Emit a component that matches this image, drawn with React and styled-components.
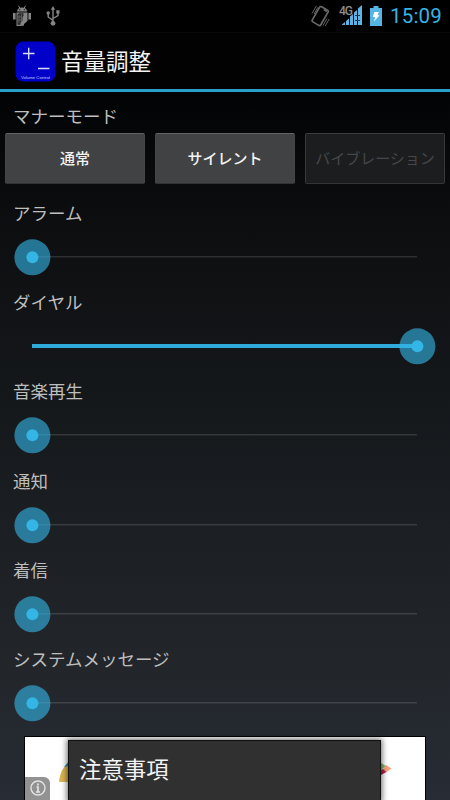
import React, { useState } from 'react';
import styled, { createGlobalStyle } from 'styled-components';

const GlobalStyle = createGlobalStyle`
  html, body {
    margin: 0;
    padding: 0;
    background: #000;
  }

  * {
    box-sizing: border-box;
  }
`;

const Screen = styled.div`
  display: flex;
  flex-direction: column;
  width: 450px;
  height: 800px;
  overflow: hidden;
  background: linear-gradient(#000 0, #020304 92px, #0c0d0f 210px, #15181b 400px, #212529 640px, #272c35 800px);
  font-family: Roboto, "Noto Sans CJK JP", sans-serif;
  color: #bebebe;
`;

const StatusBar = styled.div`
  display: flex;
  flex: none;
  align-items: center;
  justify-content: space-between;
  height: 33px;
  padding: 0 8px 0 12px;
  background: #000;
  border-bottom: 1px solid #090909;
`;

const StatusGroup = styled.div`
  display: flex;
  align-items: center;
  gap: ${props => props.$gap}px;
`;

const Clock = styled.span`
  width: 52px;
  font-size: 20.5px;
  line-height: 32px;
  letter-spacing: 0.2px;
  text-align: right;
  white-space: nowrap;
  color: #33b5e5;
`;

const ActionBar = styled.header`
  display: flex;
  flex: none;
  align-items: center;
  gap: 5px;
  height: 59px;
  padding-left: 15px;
  border-bottom: 3px solid #2a9fcb;
  background: #020202;
`;

const Title = styled.h1`
  margin: 0;
  padding-top: 1px;
  font-size: 22.5px;
  font-weight: 400;
  line-height: 30px;
  color: #f3f3f3;
`;

const ModeSection = styled.section`
  flex: none;
  height: 104px;
  padding-top: 12px;
`;

const Label = styled.div`
  height: 26px;
  padding-left: 13px;
  font-size: 17.5px;
  line-height: 26px;
`;

const ButtonRow = styled.div`
  display: grid;
  grid-template-columns: repeat(3, 140px);
  gap: 10px;
  padding: 3px 5px 0;
`;

const ModeButton = styled.button`
  height: 51px;
  padding: 0;
  border: 1px solid #454647;
  border-top-color: #626364;
  border-bottom-color: #333435;
  border-radius: 2px;
  background: #414243;
  font-family: inherit;
  font-size: 15px;
  font-weight: 500;
  line-height: 48px;
  color: #f3f3f3;

  &:disabled {
    border-color: #3c3d3e #38393a #343536;
    background: #1c1d1e;
    font-weight: 400;
    color: #464748;
  }
`;

const SliderList = styled.main`
  flex: none;
  padding-top: 1px;
`;

const SliderSection = styled.section`
  height: 89.2px;
  padding-top: 4px;
`;

const Slider = styled.div`
  display: flex;
  align-items: center;
  height: 36px;
  margin: 12.5px 32px 0;
`;

const Track = styled.div`
  position: relative;
  width: 385px;
  height: 2px;
  margin-bottom: 1px;
  background: linear-gradient(rgba(255, 255, 255, 0.13) 50%, rgba(255, 255, 255, 0.06) 50%);
`;

const Progress = styled.div`
  position: absolute;
  top: -1px;
  left: 0;
  height: 4px;
  background: #2eabdb;
`;

const Thumb = styled.svg`
  position: absolute;
  top: -18px;
  width: 38px;
  height: 38px;
  margin-left: -19px;
`;

const AdBanner = styled.div`
  position: relative;
  flex: none;
  width: 402px;
  height: 64px;
  margin: 4px 0 0 24px;
  border: 1px solid #000;
  border-bottom: 0;
  background: #fff;
`;

const AdArt = styled.svg`
  position: absolute;
  top: 0;
  left: 0;
`;

const InfoBadge = styled.div`
  position: absolute;
  top: 40px;
  left: 0;
  display: grid;
  place-items: center;
  width: 25px;
  height: 24px;
  padding-bottom: 3px;
  border-top-right-radius: 6px;
  background: #929292;
`;

const OptionsMenu = styled.div`
  position: absolute;
  top: 3px;
  left: 43px;
  width: 313px;
  height: 62px;
  padding: 11px 10px;
  border: 1px solid #101010;
  background: #303030;
  box-shadow: 0 0 6px 1px rgba(0, 0, 0, 0.6);
  font-size: 22.4px;
  line-height: 36px;
  color: #f3f3f3;
`;

const SLIDERS = [
    { name: 'アラーム', value: 0 },
    { name: 'ダイヤル', value: 100 },
    { name: '音楽再生', value: 0 },
    { name: '通知', value: 0 },
    { name: '着信', value: 0 },
    { name: 'システムメッセージ', value: 0 }
];

function DebugIcon() {
    return (
        <svg width="20" height="22" viewBox="0 0 20 22" fill="#858585">
            <path d="M5 6.5C5.2 3.7 7 2.5 10 2.5s4.8 1.2 5 4z" />
            <path d="M6.5 0.8 7.8 3M13.5 0.8 12.2 3" stroke="#858585" />
            <path d="M1 8h2.6v6.5H1zM16.4 8H19v6.5h-2.6zM4.5 7.5h11v8.5L12 19v1.5L9 21H4.5z" />
            <path d="M5.5 9.5 7 8.3h4.5v2.5l-1 2v3l-2 2v2h-3z" fill="#292929" />
            <path d="M7 10v8M9.5 9v8M5.5 12h5M5.5 15h5" stroke="#707070" strokeWidth="0.7" />
            <circle cx="7.7" cy="4.7" r="0.6" fill="#111" />
            <circle cx="12.3" cy="4.7" r="0.6" fill="#111" />
        </svg>
    );
}

function UsbIcon() {
    return (
        <svg width="14" height="20" viewBox="0 0 14 20" fill="#858585">
            <path d="M7 2v15M7 14.3 2.2 11V7.5M7 12.5l5-3V6" fill="none" stroke="#858585" strokeWidth="1.4" />
            <path d="M7 0 9.2 3.8H4.8zM10.3 4.2h3.2v3.2h-3.2z" />
            <circle cx="2.2" cy="7" r="1.7" />
            <circle cx="7" cy="17.3" r="2.4" />
        </svg>
    );
}

function VibrateIcon() {
    return (
        <svg width="20" height="22" viewBox="0 0 20 22" fill="none" stroke="#6c6c6c">
            <rect x="5.3" y="2.3" width="9.8" height="17.5" rx="1.5" strokeWidth="1.6" transform="rotate(30 10.2 11)" />
            <path d="M13.7 4.6 17 6.5" strokeWidth="1.5" />
            <path d="M2 8.5 6.3 1M4 9 8 2.2M13 20.5l4-7M15.2 21l4-7" strokeWidth="0.9" />
        </svg>
    );
}

const Signal = styled.div`
  position: relative;
  width: 24px;
  height: 22px;
`;

const NetworkType = styled.span`
  position: absolute;
  top: 1px;
  left: 1px;
  font-size: 12px;
  font-weight: 500;
  line-height: 10px;
  letter-spacing: -1px;
  color: #8c8c8c;
`;

function SignalIcon() {
    return (
        <Signal>
            <svg width="24" height="22" viewBox="0 0 24 22" fill="#5cb5e4">
                <path d="M4 19.5 7 17v3H4zM8 16l3-2.5V20H8zM12 11.5 15 9v11h-3zM16 7.5 19 5v15h-3zM20 3.5 24 0v20h-4z" />
                <path d="M17 10.5h5M17 15.5h5" stroke="#173849" strokeWidth="1" />
            </svg>
            <NetworkType>4G</NetworkType>
        </Signal>
    );
}

function BatteryIcon() {
    return (
        <svg width="12" height="20" viewBox="0 0 12 20">
            <path d="M3.5 0h5v2H12v18H0V2h3.5z" fill="#55b5e5" />
            <path d="M4.4 6h4.4L7.6 9.2h2L4 15.6l1.2-4.5H2.7z" fill="#fff" />
        </svg>
    );
}

function AppIcon() {
    return (
        <svg width="41" height="41" viewBox="0 0 41 41">
            <rect x="0.5" y="0.5" width="40" height="40" rx="8" fill="#0000c8" />
            <path d="M8 12.5h11.5M13.7 6.7v11.5M23 27.5h11.5" stroke="#dcdcff" strokeWidth="1.4" />
            <text x="20.5" y="37.7" fill="#c4c4ff" fontFamily="Liberation Sans, sans-serif" fontSize="4.4" textAnchor="middle" textLength="29">Volume Control</text>
        </svg>
    );
}

function VolumeSlider({ name, value }) {
    return (
        <SliderSection>
            <Label>{name}</Label>
            <Slider>
                <Track>
                    <Progress style={{ width: `${value}%` }} />
                    <Thumb style={{ left: `${value}%` }} viewBox="0 0 38 38" fill="#33b5e5">
                        <circle cx="19.4" cy="19.3" r="18" opacity="0.62" />
                        <circle cx="19.4" cy="19.3" r="6" />
                    </Thumb>
                </Track>
            </Slider>
        </SliderSection>
    );
}

export default function App() {
    const [showMenu, setShowMenu] = useState(true);

    return (
        <Screen>
            <GlobalStyle />
            <StatusBar>
                <StatusGroup $gap={14}>
                    <DebugIcon />
                    <UsbIcon />
                </StatusGroup>
                <StatusGroup $gap={8}>
                    <VibrateIcon />
                    <SignalIcon />
                    <BatteryIcon />
                    <Clock>15:09</Clock>
                </StatusGroup>
            </StatusBar>
            <ActionBar>
                <AppIcon />
                <Title>音量調整</Title>
            </ActionBar>
            <ModeSection>
                <Label>マナーモード</Label>
                <ButtonRow>
                    <ModeButton>通常</ModeButton>
                    <ModeButton>サイレント</ModeButton>
                    <ModeButton disabled>バイブレーション</ModeButton>
                </ButtonRow>
            </ModeSection>
            <SliderList>
                {SLIDERS.map(slider => <VolumeSlider key={slider.name} {...slider} />)}
            </SliderList>
            <AdBanner>
                <AdArt width="400" height="63" viewBox="0 0 400 63">
                    <path d="M34 45C35 35 38 30 44 26v19z" fill="#dcb54f" />
                    <path d="M39 30 44 24v5z" fill="#288fb2" />
                    <path d="M356 26l5 3-5 4z" fill="#8fb879" />
                    <path d="M361 28l5.5 3.5-5 3.5-3.5-2.5z" fill="#f7a277" />
                    <path d="M356 33l2-1 3.5 3-5.5 3z" fill="#b22650" />
                </AdArt>
                <InfoBadge>
                    <svg width="16" height="16" viewBox="0 0 16 16" fill="none" stroke="#e4e4e4">
                        <circle cx="8" cy="8" r="7" strokeWidth="1.4" />
                        <path d="M8 3.5v2M6.5 7H8v5M6 12h4" strokeWidth="1.7" />
                    </svg>
                </InfoBadge>
                {showMenu && <OptionsMenu onClick={() => setShowMenu(false)}>注意事項</OptionsMenu>}
            </AdBanner>
        </Screen>
    );
}
